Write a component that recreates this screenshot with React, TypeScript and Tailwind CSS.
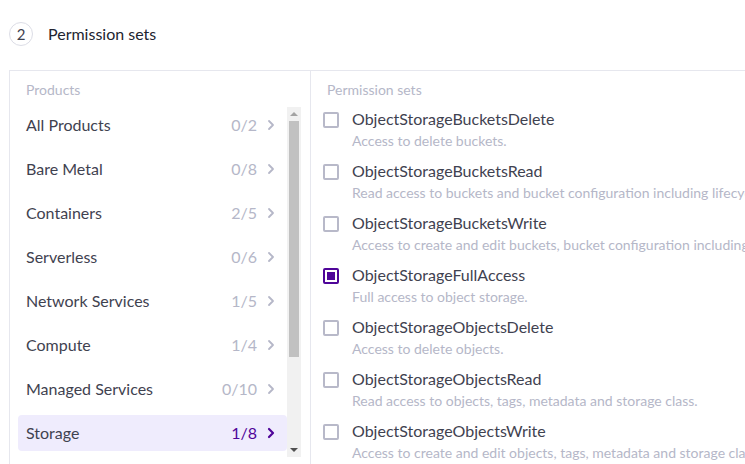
const PRODUCTS = [
  { name: "All Products", count: "0/2" },
  { name: "Bare Metal", count: "0/8" },
  { name: "Containers", count: "2/5" },
  { name: "Serverless", count: "0/6" },
  { name: "Network Services", count: "1/5" },
  { name: "Compute", count: "1/4" },
  { name: "Managed Services", count: "0/10" },
  { name: "Storage", count: "1/8", active: true },
];

const PERMISSIONS = [
  { name: "ObjectStorageBucketsDelete", desc: "Access to delete buckets." },
  { name: "ObjectStorageBucketsRead", desc: "Read access to buckets and bucket configuration including lifecycle rules, CORS and policies." },
  { name: "ObjectStorageBucketsWrite", desc: "Access to create and edit buckets, bucket configuration including lifecycle rules and CORS." },
  { name: "ObjectStorageFullAccess", desc: "Full access to object storage.", checked: true },
  { name: "ObjectStorageObjectsDelete", desc: "Access to delete objects." },
  { name: "ObjectStorageObjectsRead", desc: "Read access to objects, tags, metadata and storage class." },
  { name: "ObjectStorageObjectsWrite", desc: "Access to create and edit objects, tags, metadata and storage class." },
];

function Chevron({ active }: { active?: boolean }) {
  return (
    <svg width="8" height="12" viewBox="0 0 8 12" fill="none">
      <path
        d="M2 2 L6 6 L2 10"
        stroke={active ? "#4f0599" : "#b5b7c8"}
        strokeWidth={active ? 2.2 : 1.8}
        strokeLinecap="round"
        strokeLinejoin="round"
      />
    </svg>
  );
}

function Scrollbar() {
  return (
    <div className="flex w-[14px] shrink-0 flex-col bg-[#f1f1f1]">
      <div className="flex h-[14px] items-center justify-center">
        <div className="h-0 w-0 border-x-[4px] border-b-[4px] border-x-transparent border-b-[#a3a3a3]" />
      </div>
      <div className="mx-[2px] h-[236px] bg-[#c1c1c1]" />
      <div className="flex-1" />
      <div className="flex h-[14px] items-center justify-center">
        <div className="h-0 w-0 border-x-[4px] border-t-[4px] border-x-transparent border-t-[#505050]" />
      </div>
    </div>
  );
}

export default function App() {
  return (
    <div className="h-[464px] w-[745px] overflow-hidden bg-white font-['Lato','Noto_Sans',sans-serif] text-[#3f4250]">
      {/* step header */}
      <div className="flex h-[70px] items-center gap-[15px] pl-[9px] pb-[2px]">
        <span className="flex h-[24px] w-[24px] items-center justify-center rounded-full border border-[#dcdde6] text-[15px] text-[#3f4250]">
          2
        </span>
        <span className="text-[16px] text-[#222430]">Permission sets</span>
      </div>

      <div className="ml-[9px] flex w-[800px] border-l border-t border-[#e6e7ee]">
        {/* products pane */}
        <div className="flex w-[301px] shrink-0 flex-col border-r border-[#e6e7ee] pr-[9px]">
          <div className="flex h-[36px] items-center pl-[16px] text-[14px] text-[#b5b7c8]">Products</div>
          <div className="flex h-[350px]">
            <div className="flex-1 overflow-hidden pl-[8px]">
              <div className="flex flex-col gap-[8px]">
                {PRODUCTS.map((p) => (
                  <div
                    key={p.name}
                    className={`flex h-[36px] shrink-0 items-center rounded-[4px] px-[8px] ${p.active ? "bg-[#efecfd]" : ""}`}
                  >
                    <span className="flex-1 text-[16px] text-[#3f4250]">{p.name}</span>
                    <span className={`text-[16px] ${p.active ? "text-[#4f0599]" : "text-[#b5b7c8]"}`}>{p.count}</span>
                    <span className="ml-[10px] mr-[4px] flex items-center">
                      <Chevron active={p.active} />
                    </span>
                  </div>
                ))}
              </div>
            </div>
            <Scrollbar />
          </div>
        </div>

        {/* permission sets pane */}
        <div className="flex-1">
          <div className="flex h-[36px] items-center pl-[16px] text-[14px] text-[#b5b7c8]">Permission sets</div>
          <div className="flex flex-col gap-[8px] pl-[12px] pt-[1px]">
            {PERMISSIONS.map((p) => (
              <div key={p.name} className="flex gap-[13px]">
                <span
                  className={`mt-[4px] flex h-[16px] w-[16px] shrink-0 items-center justify-center rounded-[2px] border-2 ${p.checked ? "border-[#4f0599]" : "border-[#b8b9c9]"}`}
                >
                  {p.checked && <span className="h-[8px] w-[8px] bg-[#4f0599]" />}
                </span>
                <div className="flex flex-col">
                  <span className="h-[22px] text-[16px] leading-[22px] text-[#3f4250]">{p.name}</span>
                  <span className="h-[22px] whitespace-nowrap text-[14px] leading-[22px] text-[#b5b7c8]">{p.desc}</span>
                </div>
              </div>
            ))}
          </div>
        </div>
      </div>
    </div>
  );
}
